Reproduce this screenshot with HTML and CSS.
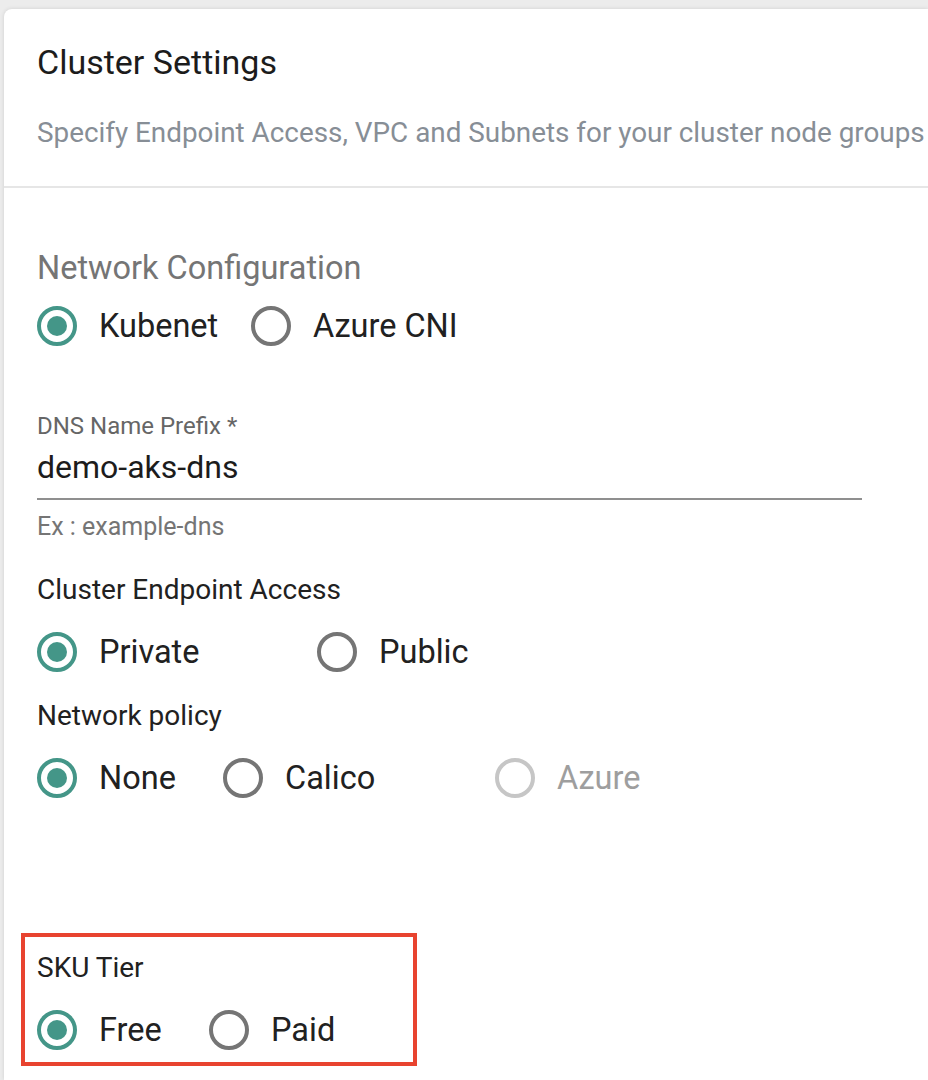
FILE: index.html
```html
<!DOCTYPE html>
<html>
<head>
<meta charset="utf-8">
<link rel="stylesheet" href="styles.css">
</head>
<body>
<div class="card">
  <div class="card-header">
    <div class="title">Cluster Settings</div>
    <div class="subtitle">Specify Endpoint Access, VPC and Subnets for your cluster node groups</div>
  </div>
  <div class="card-body">
    <div class="section-title">Network Configuration</div>
    <div class="radio-row row-net">
      <label class="option w-kubenet"><span class="radio checked"></span><span class="opt-label">Kubenet</span></label>
      <label class="option"><span class="radio"></span><span class="opt-label">Azure CNI</span></label>
    </div>

    <div class="field">
      <div class="field-label">DNS Name Prefix *</div>
      <div class="field-input">demo-aks-dns</div>
      <div class="field-helper">Ex : example-dns</div>
    </div>

    <div class="group-title gt-endpoint">Cluster Endpoint Access</div>
    <div class="radio-row">
      <label class="option w-private"><span class="radio checked"></span><span class="opt-label">Private</span></label>
      <label class="option"><span class="radio"></span><span class="opt-label">Public</span></label>
    </div>

    <div class="group-title">Network policy</div>
    <div class="radio-row">
      <label class="option w-none"><span class="radio checked"></span><span class="opt-label">None</span></label>
      <label class="option w-calico"><span class="radio"></span><span class="opt-label">Calico</span></label>
      <label class="option disabled"><span class="radio"></span><span class="opt-label">Azure</span></label>
    </div>

    <div class="sku-box">
      <div class="group-title sku-title">SKU Tier</div>
      <div class="radio-row">
        <label class="option w-free"><span class="radio checked"></span><span class="opt-label">Free</span></label>
        <label class="option"><span class="radio"></span><span class="opt-label">Paid</span></label>
      </div>
    </div>
  </div>
</div>
</body>
</html>
```

FILE: styles.css
```css
html, body {
  margin: 0;
  padding: 0;
}
body {
  background: #ececec;
  font-family: Roboto, "Liberation Sans", sans-serif;
  color: #212121;
  height: 1080px;
  overflow: hidden;
}
.card {
  margin: 9px 0 0 4px;
  background: #fff;
  border-radius: 8px 0 0 0;
  box-shadow: 0 0 4px rgba(0,0,0,0.12);
  height: 1071px;
  overflow: hidden;
}
.card-header {
  padding: 33px 0 33px 33px;
  border-bottom: 2px solid #e6e6e6;
}
.title {
  font-size: 34px;
  line-height: 40px;
  color: #1c1c1c;
  white-space: nowrap;
}
.subtitle {
  margin-top: 31px;
  font-size: 27.85px;
  line-height: 40px;
  color: #878e96;
  white-space: nowrap;
}
.card-body {
  padding: 60px 0 0 33px;
}
.section-title {
  font-size: 32.5px;
  line-height: 40px;
  color: #757575;
}
.radio-row {
  display: flex;
  align-items: center;
  height: 48px;
  margin-top: 20px;
}
.row-net {
  margin-top: 14px;
}
.option {
  display: flex;
  align-items: center;
  flex: none;
}
.w-kubenet { width: 214px; }
.w-private { width: 280px; }
.w-none { width: 186px; }
.w-calico { width: 272px; }
.w-free { width: 172px; }
.radio {
  box-sizing: border-box;
  width: 40px;
  height: 40px;
  border: 4px solid #757575;
  border-radius: 50%;
  display: flex;
  align-items: center;
  justify-content: center;
  flex: none;
}
.radio.checked {
  border-color: #449688;
}
.radio.checked::after {
  content: "";
  width: 20px;
  height: 20px;
  border-radius: 50%;
  background: #449688;
}
.opt-label {
  margin-left: 22px;
  font-size: 32.5px;
  line-height: 40px;
  color: #212121;
  white-space: nowrap;
}
.disabled .radio {
  border-color: #c6c6c6;
}
.disabled .opt-label {
  color: #9e9e9e;
}
.field {
  margin-top: 62px;
  width: 825px;
}
.field-label {
  font-size: 24px;
  line-height: 28px;
  color: #666;
}
.field-input {
  margin-top: 7px;
  font-size: 32px;
  line-height: 40px;
  padding-bottom: 11px;
  border-bottom: 2px solid #8f8f8f;
  color: #1c1c1c;
}
.field-helper {
  margin-top: 13px;
  font-size: 25px;
  line-height: 28px;
  color: #757575;
}
.group-title {
  font-size: 28px;
  line-height: 36px;
  color: #212121;
  margin-top: 22px;
}
.gt-endpoint {
  margin-top: 31px;
}
.sku-box {
  margin: 131px 0 0 -16px;
  width: 396px;
  box-sizing: border-box;
  border: 4px solid #e8432f;
  padding: 13px 0 8px 12px;
}
.sku-title {
  margin-top: 0;
}
```
